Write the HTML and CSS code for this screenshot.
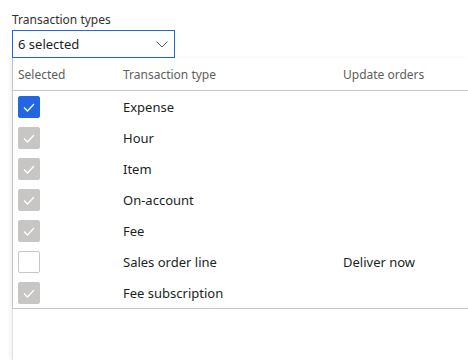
FILE: index.html
```html
<!DOCTYPE html>
<html lang="en">
<head>
  <meta charset="UTF-8" />
  <title>Transaction types</title>
  <link rel="stylesheet" href="styles.css">
</head>
<body>
  <div class="field">
    <label class="field-label">Transaction types</label>
    <div class="combo">
      <span>6 selected</span>
      <svg class="chevron" width="12" height="7" viewBox="0 0 12 7"><path d="M0.5 0.5 L6 6 L11.5 0.5" fill="none" stroke="#605e5c" stroke-width="1"/></svg>
    </div>

    <div class="dropdown">
      <div class="grid">
        <div class="row head">
          <div class="cell">Selected</div>
          <div class="cell">Transaction type</div>
          <div class="cell">Update orders</div>
        </div>
        <div class="row">
          <div class="cell"><span class="check on"><svg viewBox="0 0 22 22"><path d="M6 11.5 L9.5 15 L16 8" /></svg></span></div>
          <div class="cell">Expense</div>
          <div class="cell"></div>
        </div>
        <div class="row">
          <div class="cell"><span class="check dim"><svg viewBox="0 0 22 22"><path d="M6 11.5 L9.5 15 L16 8" /></svg></span></div>
          <div class="cell">Hour</div>
          <div class="cell"></div>
        </div>
        <div class="row">
          <div class="cell"><span class="check dim"><svg viewBox="0 0 22 22"><path d="M6 11.5 L9.5 15 L16 8" /></svg></span></div>
          <div class="cell">Item</div>
          <div class="cell"></div>
        </div>
        <div class="row">
          <div class="cell"><span class="check dim"><svg viewBox="0 0 22 22"><path d="M6 11.5 L9.5 15 L16 8" /></svg></span></div>
          <div class="cell">On-account</div>
          <div class="cell"></div>
        </div>
        <div class="row">
          <div class="cell"><span class="check dim"><svg viewBox="0 0 22 22"><path d="M6 11.5 L9.5 15 L16 8" /></svg></span></div>
          <div class="cell">Fee</div>
          <div class="cell"></div>
        </div>
        <div class="row">
          <div class="cell"><span class="check"></span></div>
          <div class="cell">Sales order line</div>
          <div class="cell">Deliver now</div>
        </div>
        <div class="row">
          <div class="cell"><span class="check dim"><svg viewBox="0 0 22 22"><path d="M6 11.5 L9.5 15 L16 8" /></svg></span></div>
          <div class="cell">Fee subscription</div>
          <div class="cell"></div>
        </div>
      </div>
    </div>
  </div>
</body>
</html>
```

FILE: styles.css
```css
body {
  margin: 0;
  font-family: "Noto Sans", Arial, sans-serif;
  color: #201f1e;
  background: #fff;
  overflow: hidden;
}

.field {
  padding: 12px 0 0 12px;
}

.field-label {
  display: block;
  font-size: 12px;
  line-height: 16px;
  color: #323130;
}

.combo {
  margin-top: 2px;
  width: 150px;
  height: 26px;
  border: 1px solid #2266e3;
  display: flex;
  align-items: center;
  justify-content: space-between;
  padding: 0 6px 0 5px;
  font-size: 13px;
}

.dropdown {
  height: 302px;
  border-left: 1px solid #e1dfdd;
  box-shadow: -2px 0 4px rgba(0, 0, 0, 0.06);
}

.grid {
  border-left: 1px solid #c8c6c4;
  margin-left: -1px;
  border-bottom: 1px solid #c8c6c4;
}

.row {
  display: grid;
  grid-template-columns: 105px 220px 1fr;
  height: 31px;
  align-items: center;
  font-size: 13px;
}

.row.head {
  height: 32px;
  border-bottom: 1px solid #c8c6c4;
  font-size: 12px;
  color: #605e5c;
}

.cell {
  padding-left: 5px;
}

.check {
  display: block;
  width: 20px;
  height: 20px;
  border: 1px solid #c8c6c4;
  border-radius: 2px;
  background: #fff;
}

.check svg {
  display: block;
  width: 22px;
  height: 22px;
  margin: -1px;
}

.check path {
  fill: none;
  stroke: #fff;
  stroke-width: 1.3;
}

.check.on {
  background: #2266e3;
  border-color: #2266e3;
}

.check.dim {
  background: #c8c6c4;
  border-color: #c8c6c4;
}
```
